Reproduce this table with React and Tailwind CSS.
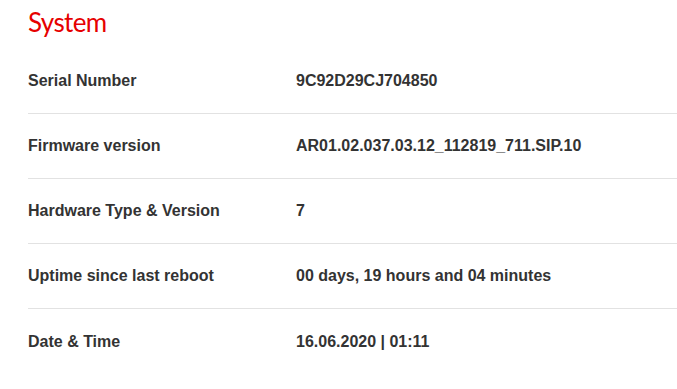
import React from "react";

const rows = [
  { label: "Serial Number", value: "9C92D29CJ704850" },
  { label: "Firmware version", value: "AR01.02.037.03.12_112819_711.SIP.10" },
  { label: "Hardware Type & Version", value: "7" },
  { label: "Uptime since last reboot", value: "00 days, 19 hours and 04 minutes" },
  { label: "Date & Time", value: "16.06.2020 | 01:11" },
];

const App = () => {
  return (
    <div className="w-[677px] h-[389px] bg-white pl-[28px] overflow-hidden font-['Liberation_Sans',Arial,sans-serif]">
      <h1 className="text-[26px] leading-[34px] pt-[5px] h-[49px] text-[#e60000] font-['Lato',sans-serif] font-normal tracking-[-0.6px]">
        System
      </h1>
      <div>
        {rows.map((row, i) => (
          <div
            key={row.label}
            className={`flex items-center h-[65px] text-[16px] font-bold text-[#333333] ${
              i < rows.length - 1 ? "border-b border-[#e2e2e2]" : ""
            }`}
          >
            <div className="w-[268px]">{row.label}</div>
            <div>{row.value}</div>
          </div>
        ))}
      </div>
    </div>
  );
};

export default App;
